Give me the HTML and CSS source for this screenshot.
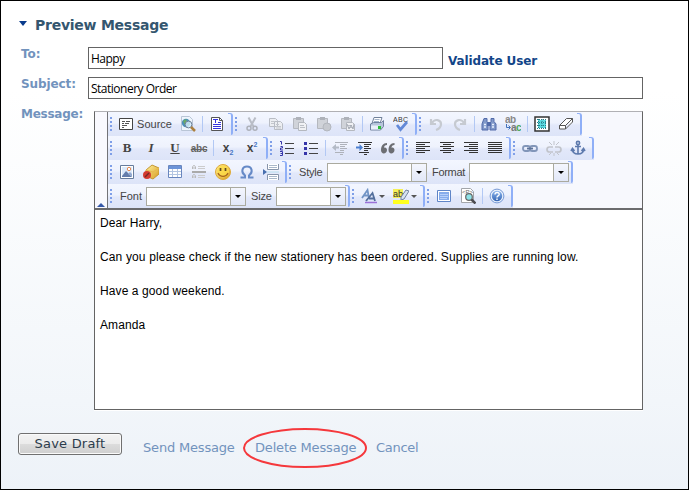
FILE: index.html
```html
<!DOCTYPE html>
<html lang="en">
<head>
<meta charset="utf-8">
<title>Preview Message</title>
<link rel="stylesheet" href="styles.css">
</head>
<body>
<svg class="defs" aria-hidden="true">
  <defs>
    <linearGradient id="gold" x1="0" y1="0" x2="1" y2="1"><stop offset="0" stop-color="#fff3a0"/><stop offset="1" stop-color="#d79a1c"/></linearGradient>
    <linearGradient id="blue" x1="0" y1="0" x2="0" y2="1"><stop offset="0" stop-color="#8fb8ee"/><stop offset="1" stop-color="#3465b4"/></linearGradient>
    <symbol id="source" viewBox="0 0 16 16"><path d="M1.500 2.500h13v11h-13z" fill="#fff" stroke="#444"/><path d="M4 5.500h3m1 0h4M4 7.500h2m1 0h4M4 9.500h5M4 11.500h2" stroke="#555"/></symbol>
    <symbol id="preview" viewBox="0 0 16 16"><path d="M1.500 .5h8l3 3v11h-11z" fill="#eef5fc" stroke="#b9c5d6"/><circle cx="6" cy="7" r="4.200" fill="#4c91b9"/><path d="M3 5l3-2 1 3-2 3zM7 8l3-1-1 3z" fill="#6aab62"/><circle cx="8.500" cy="8.500" r="3.400" fill="#d5eefc" fill-opacity=".8" stroke="#6e7f95"/><path d="M11 11l4 4" stroke="#ad803e" stroke-width="2.500"/></symbol>
    <symbol id="template" viewBox="0 0 16 16"><path d="M2.500 1.500h8l3 3v10h-11z" fill="#fff" stroke="#555"/><path d="M10.500 1.500v3h3" fill="none" stroke="#555"/><path d="M4 3.500h5M6.500 4v3M4 8.500h8M4 10.500h8M4 12.500h8M9 6.500h3" stroke="#3535e0"/></symbol>
    <symbol id="cut" viewBox="0 0 16 16"><path d="M4.500 1.500l5 9M11.500 1.500l-5 9" stroke="#b9bdc6" stroke-width="2"/><circle cx="5" cy="12.200" r="2" fill="none" stroke="#adb1ba" stroke-width="1.500"/><circle cx="11" cy="12.200" r="2" fill="none" stroke="#adb1ba" stroke-width="1.500"/></symbol>
    <symbol id="copy" viewBox="0 0 16 16"><path d="M1.500 2.500h6l2 2v6h-8zM6.500 5.500h6l2 2v6h-8z" fill="#eceef2" stroke="#b9bdc5"/><path d="M3 5.500h3M3 7.500h3M8 8.500h3M8 10.500h5M8 12h5" stroke="#c3c6cc"/></symbol>
    <symbol id="paste" viewBox="0 0 16 16"><path d="M1.500 2.500h10v10h-10z" fill="#d0d3d9" stroke="#b5b8bf"/><path d="M4 1h5v3H4z" fill="#aeb2ba"/></symbol>
    <symbol id="pastepage" viewBox="0 0 16 16"><path d="M6.500 6.500h6l2 2v6h-8z" fill="#f0f1f4" stroke="#b4b8bf"/><path d="M8 9.500h4M8 11.500h5" stroke="#bcc0c7"/></symbol>
    <symbol id="print" viewBox="0 0 16 16"><path d="M5 1.500h8l-2 6H3z" fill="#fff" stroke="#71819a"/><path d="M5.500 3.500h5M5 5.500h5" stroke="#a4b4cb"/><path d="M1.500 8l3-1.500h8l2-2v6l-3 3.500h-10z" fill="#b8c6dc" stroke="#70819d"/><path d="M2 9.500h9v4H2z" fill="#eaf0fa"/><path d="M9 10h3v3H9z" fill="#2bbf37"/></symbol>
    <symbol id="check" viewBox="0 0 16 16"><text x="0" y="5.500" textLength="15" font-family="Liberation Sans" font-size="7" fill="#333">ABC</text><path d="M4 9l3.500 4.500L14 6" fill="none" stroke="#6289d8" stroke-width="2.700"/></symbol>
    <symbol id="undo" viewBox="0 0 16 16"><path d="M3 3v5h5M4 7c3-5 9-3 9 1 0 3-2 5-5 6" fill="none" stroke="#c6cad1" stroke-width="2.200"/></symbol>
    <symbol id="find" viewBox="0 0 16 16"><path d="M3 2.500h3v3l1 1v7.500H1V8zM10 2.500h3v3l2 2.500v6H9V6.500l1-1z" fill="#8199c9" stroke="#526baa"/><path d="M6 6h4v4H6z" fill="#526baa"/><path d="M3 8.500h2M11 8.500h2M3 11h2m6 0h2" stroke="#e8f0ff" stroke-width="1.500"/></symbol>
    <symbol id="replace" viewBox="0 0 16 16"><g font-family="Liberation Sans" font-size="10" font-weight="bold"><text x="0" y="7" textLength="11" fill="#888">ab</text><text x="6" y="15" fill="#777">a</text><text x="11" y="15" fill="#4ba85b">c</text></g><path d="M1.500 8v3.500H5M3.500 9.500l2 2-2 2" fill="none" stroke="#4472ba"/></symbol>
    <symbol id="selectall" viewBox="0 0 16 16"><path d="M1 1h14v14H1z" fill="#fff" stroke="#333" stroke-width="1.500"/><path d="M4 4h8v8H4z" fill="#5bdbe2"/><path d="M3 3.500h10M3 6.500h10M3 9.500h10M3 12.500h10M4.500 3v10M8 3v10M11.500 3v10" stroke="#297d89" stroke-dasharray="1 1"/></symbol>
    <symbol id="eraser" viewBox="0 0 16 16"><path d="M1.500 9.500l7-7h6l-7 7zM1.500 9.500v3.500h6v-3.500M7.500 13l7-7V2.500" fill="#fff" stroke="#555"/></symbol>
    <symbol id="ol" viewBox="0 0 16 16"><path d="M6 3.500h9M6 8.500h9M6 13.500h9" stroke="#444"/><path d="M1 1.500h1.500V4.500M1.500 6.500H3.500v1.500H1.500v2H4M1 11.500h2.500v4H1M1.500 13.500h2" fill="none" stroke="#3535aa"/></symbol>
    <symbol id="ul" viewBox="0 0 16 16"><path d="M6 3.500h9M6 8.500h9M6 13.500h9" stroke="#444"/><path d="M1 2h3v3H1zM1 7h3v3H1zM1 12h3v3H1z" fill="#3535aa"/></symbol>
    <symbol id="outdent" viewBox="0 0 16 16"><path d="M3 2.500h13M8 4.500h7M8 6.500h5M8 8.500h7M8 10.500h4M3 12.500h9M8 14.500h3" stroke="#aeb2ba"/><path d="M0 7.500L4 4v2.500h3v2H4V11z" fill="#b3bac6"/></symbol>
    <symbol id="indent" viewBox="0 0 16 16"><path d="M2 2.500h14M8 4.500h7M8 6.500h5M8 8.500h7M8 10.500h4M3 12.500h10M8 14.500h3" stroke="#333"/><path d="M7 7.500L3.500 4v2.500H0v2h3.500V11z" fill="#4c80d1"/></symbol>
    <symbol id="quote" viewBox="0 0 16 16"><path d="M7 3C3 3 1 6 1 10c0 5 6 4 6 0 0-2-2-3-3-2 0-2 1-3 3-3zM14.500 3c-4 0-6 3-6 7 0 5 6 4 6 0 0-2-2-3-3-2 0-2 1-3 3-3z" fill="#6c6e73"/></symbol>
    <symbol id="left" viewBox="0 0 16 16"><path d="M1 2.500h14M1 4.500h9M1 6.500h14M1 8.500h9M1 10.500h14M1 12.500h9" stroke="#333"/></symbol>
    <symbol id="center" viewBox="0 0 16 16"><path d="M1 2.500h14M4 4.500h8M1 6.500h14M4 8.500h8M1 10.500h14M4 12.500h8" stroke="#333"/></symbol>
    <symbol id="right" viewBox="0 0 16 16"><path d="M1 2.500h14M6 4.500h9M1 6.500h14M6 8.500h9M1 10.500h14M6 12.500h9" stroke="#333"/></symbol>
    <symbol id="justify" viewBox="0 0 16 16"><path d="M1 2.500h14M1 4.500h14M1 6.500h14M1 8.500h14M1 10.500h14M1 12.500h14" stroke="#333"/></symbol>
    <symbol id="link" viewBox="0 0 16 16"><g fill="none" stroke="#8296b9" stroke-width="1.800"><rect x="1" y="6" width="7" height="5" rx="2.300"/><rect x="8" y="6" width="7" height="5" rx="2.300"/><path d="M5 8.500h6" stroke="#5d7398"/></g></symbol>
    <symbol id="unlink" viewBox="0 0 16 16"><g fill="none" stroke="#c1c4cb" stroke-width="1.700"><path d="M7 7H3.500a2 2 0 000 5H7M9 7h3.500a2 2 0 010 5H9"/><path d="M8 1v4M3 2l3 3M13 2l-3 3M5 13l-2 2M11 13l2 2M8 13v3" stroke-width="1"/></g></symbol>
    <symbol id="anchor" viewBox="0 0 16 16"><g fill="none" stroke="#5d7aad" stroke-width="1.600"><circle cx="8" cy="3" r="1.600"/><path d="M8 5v9M5 6.500h6M2.500 9c0 3.500 2.500 5 5.500 5s5.500-1.500 5.500-5M1 11l1.500-2.500L4.500 11M11.500 11l2-2.500L15 11"/></g></symbol>
    <symbol id="image" viewBox="0 0 16 16"><path d="M1.500 1.500h13v13h-13z" fill="#fff" stroke="#667c9c"/><path d="M3 3h10v10H3z" fill="#dceafb"/><path d="M3 12l4-5 6 6H3z" fill="#647dab"/><path d="M9 10l2-2 2 2v3" fill="#93a9cf"/><circle cx="10" cy="5" r="1.700" fill="#fff" stroke="#e78a50"/></symbol>
    <symbol id="flash" viewBox="0 0 16 16"><path d="M3 6l6-5 7 3v6l-6 5-7-3z" fill="url(#gold)" stroke="#c49835"/><path d="M3 6l7 2 6-4M10 8v6" fill="none" stroke="#e6b94b"/><circle cx="4" cy="11" r="4" fill="#d43a30"/><path d="M2 13l4-4" stroke="#732a27" stroke-width="1.500"/></symbol>
    <symbol id="table" viewBox="0 0 16 16"><path d="M1.500 1.500h13v12h-13z" fill="#fff" stroke="#6986be"/><path d="M2 2h12v3H2z" fill="#6c94d8"/><path d="M2 7.500h12M2 10.500h12M5.500 5v8M10.500 5v8" stroke="#b3c5e2"/></symbol>
    <symbol id="hr" viewBox="0 0 16 16"><path d="M1 8h14" stroke="#aaa" stroke-width="2"/><path d="M7 2.500h7M7 4.500h7M7 11.500h7M7 13.500h7" stroke="#ccc"/><path d="M1.500 5V3l1-1.500h1l1 1.500v2M1.500 4h3M1.500 14v-2l1-1.500h1l1 1.500v2M1.500 13h3" fill="none" stroke="#bbb"/></symbol>
    <symbol id="smiley" viewBox="0 0 16 16"><circle cx="8" cy="8" r="7.500" fill="url(#gold)" stroke="#dfaa37"/><circle cx="8" cy="7.500" r="6" fill="#ffdd45" opacity=".75"/><path d="M5.500 4v3M10.500 4v3" stroke="#634b23" stroke-width="1.700"/><path d="M3 9c2 4.500 8 4.500 10 0" fill="none" stroke="#a7631e" stroke-width="1.300"/></symbol>
    <symbol id="omega" viewBox="0 0 16 16"><path d="M1.500 13.500H6V11.500C1.500 8 3 2.500 8 2.500S14.500 8 10 11.500v2h4.500" fill="none" stroke="#668ac7" stroke-width="2"/></symbol>
    <symbol id="pagebreak" viewBox="0 0 16 16"><path d="M4.500 0v5.500h11V0M4.500 16v-5.500h11V16" fill="#fff" stroke="#8795ab"/><path d="M6 1.500h8M6 3.500h8M6 12.500h8M6 14.500h8" stroke="#a9b8ca"/><path d="M4 8h12" stroke="#b6ddee"/><path d="M0 5l4 3-4 3z" fill="#486faf"/></symbol>
    <symbol id="textcolor" viewBox="0 0 16 16"><path d="M1 10L6.500 2 8 10M3 7.500h4.500" fill="none" stroke="#7194c5" stroke-width="1.800"/><path d="M5 13L11.500 5 14 13M8 10.500h6" fill="none" stroke="#536f9c" stroke-width="1.800"/><path d="M4 14.500h12" stroke="#9b72d8" stroke-width="1.500"/></symbol>
    <symbol id="bgcolor" viewBox="0 0 16 16"><path d="M0 1h10v9H0z" fill="#f4ef58"/><text x="0" y="8.500" font-family="Liberation Sans" font-size="9" textLength="10" fill="#333">ab</text><path d="M8 9l5-7 3 1-5 8-3 1z" fill="#d7e2ef" stroke="#71829e"/><path d="M0 12h16v4H0z" fill="#ffff20"/></symbol>
    <symbol id="fit" viewBox="0 0 16 16"><path d="M1.500 2.500h13v11h-13z" fill="#fff" stroke="#5f85c7"/><path d="M3 4h10v8H3z" fill="#86aceb"/><path d="M4 6.500h8M4 8.500h8M4 10.500h7" stroke="#b7d0fa"/></symbol>
    <symbol id="blocks" viewBox="0 0 16 16"><path d="M1.500.5h9l3 3v11h-12z" fill="#fff" stroke="#a2a5aa"/><text x="2" y="6" font-family="Liberation Sans" font-size="6" fill="#666">&lt;P&gt;</text><circle cx="9" cy="9" r="3.300" fill="#8fe2e7" stroke="#666" stroke-width="1.200"/><path d="M11.500 11.500l4 4" stroke="#4c4c52" stroke-width="2.500"/></symbol>
    <symbol id="help" viewBox="0 0 16 16"><circle cx="8" cy="8" r="6.900" fill="#e8f0fb" stroke="#7699d5"/><circle cx="8" cy="8" r="5.200" fill="url(#blue)"/><path d="M6 6.500c0-3 4.500-2.500 4.200 0C10 8 8 7.800 8 9.500M8 10.500V12" fill="none" stroke="#fff" stroke-width="1.400"/></symbol>
  </defs>
</svg>
<main class="page">
  <h1 class="heading"><span class="disclosure"></span>Preview Message</h1>
  <form class="fields">
    <label class="label to" for="to">To:</label>
    <div class="row"><input class="input short" id="to" value="Happy"><a class="validate">Validate User</a></div>
    <label class="label subject" for="subject">Subject:</label>
    <input class="input" id="subject" value="Stationery Order">
    <span class="label message">Message:</span>
    <section class="editor">
      <div class="chrome">
        <div class="collapse"><i></i></div>
        <div class="toolbars">
          <div class="bar">
            <div class="group"><span class="btn source"><svg><use href="#source"/></svg><span>Source</span></span><span class="btn"><svg><use href="#preview"/></svg></span><i class="sep"></i><span class="btn"><svg><use href="#template"/></svg></span></div>
            <div class="group"><span class="btn"><svg><use href="#cut"/></svg></span><span class="btn"><svg><use href="#copy"/></svg></span><span class="btn"><svg><use href="#paste"/><use href="#pastepage"/></svg></span><span class="btn"><svg><use href="#paste"/><circle cx="11" cy="11" r="4" fill="#c6c9cf" stroke="#b3b7be"/></svg></span><span class="btn"><svg><use href="#paste"/><use href="#pastepage"/><path d="M7 8l2 5 2-4 2 4 1-5" fill="none" stroke="#a6abb5"/></svg></span><i class="sep"></i><span class="btn"><svg><use href="#print"/></svg></span><span class="btn"><svg><use href="#check"/></svg></span></div>
            <div class="group"><span class="btn"><svg><use href="#undo"/></svg></span><span class="btn"><svg class="flip"><use href="#undo"/></svg></span><i class="sep"></i><span class="btn"><svg><use href="#find"/></svg></span><span class="btn"><svg><use href="#replace"/></svg></span><i class="sep"></i><span class="btn"><svg><use href="#selectall"/></svg></span><span class="btn"><svg><use href="#eraser"/></svg></span></div>
          </div>
          <div class="bar">
            <div class="group"><b class="btn glyph">B</b><span class="btn glyph italic">I</span><span class="btn glyph under">U</span><span class="btn strike">abc</span><i class="sep"></i><span class="btn script">x<small class="low">2</small></span><span class="btn script">x<small class="high">2</small></span></div>
            <div class="group"><span class="btn"><svg><use href="#ol"/></svg></span><span class="btn"><svg><use href="#ul"/></svg></span><i class="sep"></i><span class="btn"><svg><use href="#outdent"/></svg></span><span class="btn"><svg><use href="#indent"/></svg></span><span class="btn"><svg><use href="#quote"/></svg></span></div>
            <div class="group"><span class="btn"><svg><use href="#left"/></svg></span><span class="btn"><svg><use href="#center"/></svg></span><span class="btn"><svg><use href="#right"/></svg></span><span class="btn"><svg><use href="#justify"/></svg></span></div>
            <div class="group"><span class="btn"><svg><use href="#link"/></svg></span><span class="btn"><svg><use href="#unlink"/></svg></span><span class="btn"><svg><use href="#anchor"/></svg></span></div>
          </div>
          <div class="bar">
            <div class="group"><span class="btn"><svg><use href="#image"/></svg></span><span class="btn"><svg><use href="#flash"/></svg></span><span class="btn"><svg><use href="#table"/></svg></span><span class="btn"><svg><use href="#hr"/></svg></span><span class="btn"><svg><use href="#smiley"/></svg></span><span class="btn"><svg><use href="#omega"/></svg></span><span class="btn"><svg><use href="#pagebreak"/></svg></span></div>
            <div class="group"><span class="name style">Style</span><span class="combo"><i></i></span><span class="name format">Format</span><span class="combo"><i></i></span></div>
          </div>
          <div class="bar">
            <div class="group"><span class="name font">Font</span><span class="combo"><i></i></span><span class="name size">Size</span><span class="combo small"><i></i></span></div>
            <div class="group"><span class="btn drop"><svg><use href="#textcolor"/></svg><i></i></span><span class="btn drop"><svg><use href="#bgcolor"/></svg><i></i></span></div>
            <div class="group"><span class="btn"><svg><use href="#fit"/></svg></span><span class="btn"><svg><use href="#blocks"/></svg></span><i class="sep"></i><span class="btn"><svg><use href="#help"/></svg></span></div>
          </div>
        </div>
      </div>
      <div class="body"><p>Dear Harry,</p><p class="long">Can you please check if the new stationery has been ordered. Supplies are running low.</p><p>Have a good weekend.</p><p>Amanda</p></div>
    </section>
  </form>
  <footer class="actions">
    <button class="save">Save Draft</button><a class="send">Send Message</a><a class="delete">Delete Message<svg class="ring" viewBox="0 0 126 42"><ellipse cx="63" cy="21" rx="61" ry="19"/></svg></a><a class="cancel">Cancel</a>
  </footer>
</main>
</body>
</html>
```
FILE: styles.css
```css
* { box-sizing: border-box; }
body { margin: 0; }
.defs { position: absolute; width: 0; height: 0; }
.page {
  width: 689px; height: 490px; overflow: hidden;
  border: 1px solid #000;
  background: linear-gradient(#fff 0, #fff 90px, #f2f6fa 400px, #edf2f8 100%);
  font-family: "DejaVu Sans", sans-serif;
}
.heading {
  display: flex; align-items: center; gap: 8px;
  height: 20px; margin: 14px 0 0 18px;
  font-size: 14px; color: #34566f; letter-spacing: -.25px;
}
.disclosure { margin-top: -4px; border: 4px solid transparent; border-top: 5px solid #093b8c; border-bottom: 0; }
.fields {
  display: grid; grid-template-columns: 67px 555px; grid-template-rows: 22px 22px 299px;
  row-gap: 8px; margin: 12px 0 0 20px;
}
.label { font-size: 12px; font-weight: bold; color: #7293bd; line-height: 14px; letter-spacing: -.1px; }
.message { letter-spacing: -.25px; }
.row { display: flex; align-items: center; }
.input {
  height: 22px; padding: 0 2px; border: 1px solid #646464; border-radius: 0; background: #fff;
  font: 12px "Open Sans", sans-serif; letter-spacing: -.5px; color: #000; width: 100%;
}
.short { width: 355px; }
.validate { margin: 5px 0 0 5px; font-size: 12px; font-weight: bold; color: #124588; letter-spacing: -.13px; }
.editor {
  display: flex; flex-direction: column; margin: 4px 0 0 6px; width: 549px; height: 299px;
  border: 1px solid #646464; border-top-color: #b0b0b4; box-shadow: 0 1px #fff;
}
.chrome { display: flex; height: 98px; border-bottom: 2px solid #6b6b6d; background: #f7f8fd; flex: none; }
.collapse { display: flex; align-items: flex-end; justify-content: center; width: 13px; padding-bottom: 1px; border-right: 1px solid #737377; background: #f9f9fe; }
.collapse i { border: 4px solid transparent; border-bottom: 4px solid #3558a8; border-top: 0; }
.bar { display: flex; height: 24px; }
.group {
  position: relative; display: flex; align-items: center; height: 24px; padding: 0 4px 0 7px;
  background: linear-gradient(#f3f6ff, #eef2fd 45%, #e2e8fa 55%, #dde4f8);
}
.group::before { content: ""; position: absolute; left: 2px; top: 5px; width: 2px; height: 14px; background: repeating-linear-gradient(#7f9fe8 0 2px, transparent 2px 4px); }
.group::after { content: ""; position: absolute; right: 0; top: 1px; width: 3px; height: 21px; border: 0 solid #8faff7; border-right-width: 2px; border-top-width: 1px; border-top-right-radius: 3px; border-bottom-right-radius: 2px; }
.btn { display: flex; align-items: center; justify-content: center; width: 24px; height: 24px; flex: none; color: #444; }
.btn svg { width: 16px; height: 16px; }
.btn .flip { transform: scaleX(-1); }
.source { width: 61px; gap: 3px; padding-right: 1px; }
.source, .name { font: 11px "Liberation Sans", sans-serif; color: #444; }
.sep { width: 1px; height: 16px; margin: 0 2px; background: #b2c8f4; }
.glyph { font: bold 13px "Liberation Serif", serif; }
.italic { font-style: italic; }
.under { text-decoration: underline; }
.strike { font: bold 10px "Liberation Sans", sans-serif; text-decoration: line-through; letter-spacing: -.3px; color: #666; }
.script { font: bold 12px "Liberation Sans", sans-serif; }
.script small { font-size: 7px; color: #4876c4; }
.low { margin-top: 9px; }
.high { margin-top: -8px; }
.combo { display: flex; align-items: center; justify-content: flex-end; width: 100px; height: 19px; border: 1px solid #aaaa9f; background: #fff; }
.combo.small { width: 70px; }
.combo i { position: relative; width: 15px; height: 17px; border-left: 1px solid #aaaa9f; background: linear-gradient(#f4f6fd, #e2e8f8); }
.combo i::after { content: ""; position: absolute; left: 4px; top: 7px; border: 3px solid transparent; border-top-color: #000; border-bottom: 0; }
.style, .format, .font, .size { padding-left: 5px; }
.style { width: 33px; letter-spacing: -.2px; }
.format { width: 42px; letter-spacing: -.3px; }
.font { width: 31px; }
.size { width: 30px; letter-spacing: -.2px; }
.drop { width: 32px; gap: 2px; }
.drop i { border: 3px solid transparent; border-top-color: #555; border-bottom: 0; }
.body { flex: 1; padding: 6px 5px; background: #fff; font: 12px/14px "Liberation Sans", sans-serif; color: #000; letter-spacing: .1px; }
.body p { margin: 0 0 20px; white-space: nowrap; }
.body .long { letter-spacing: .142px; }
.actions { display: flex; align-items: flex-start; margin: 27px 0 0 17px; font-size: 13px; color: #7293bd; }
.actions a { position: relative; margin-top: 7px; line-height: 16px; white-space: nowrap; letter-spacing: -.18px; }
.save {
  width: 104px; height: 22px; padding: 0 0 1px; border: 1px solid #707070; border-radius: 3px;
  background: linear-gradient(#f3f3f3, #ebebeb 50%, #dcdcdc 50%, #cfcfcf); box-shadow: inset 0 0 0 1px #fafafa;
  font: 13px "DejaVu Sans", sans-serif; letter-spacing: .2px; color: #2c3c4c;
}
.send { width: 92px; margin-left: 21px; }
.delete { width: 102px; margin-left: 20px; }
.actions .cancel { margin-left: 19px; letter-spacing: -.3px; }
.ring { position: absolute; left: -13px; top: -13px; width: 126px; height: 42px; fill: none; stroke: #f5383c; stroke-width: 2; }
```
